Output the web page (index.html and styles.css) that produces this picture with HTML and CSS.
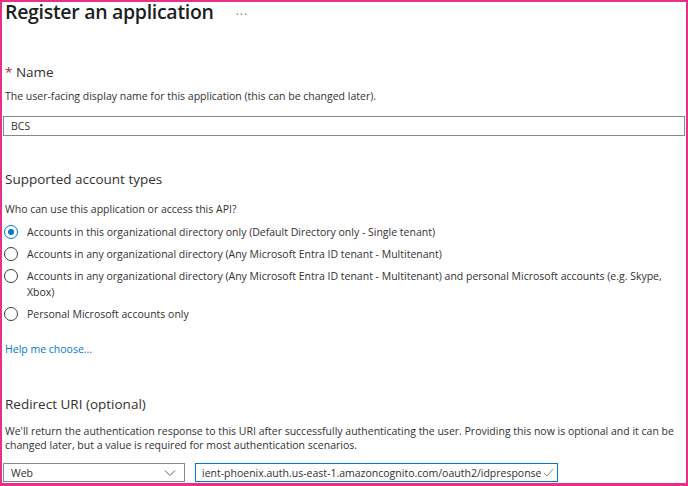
FILE: index.html
```html
<!DOCTYPE html>
<html>
<head>
<meta charset="utf-8">
<link rel="stylesheet" href="styles.css">
</head>
<body>
<div class="frame">
  <div class="title-row">
    <h1 class="title">Register an application</h1>
    <span class="more">···</span>
  </div>

  <section class="name-section">
    <div class="label"><span class="req">*</span> Name</div>
    <div class="desc">The user-facing display name for this application (this can be changed later).</div>
    <div class="textbox">BCS</div>
  </section>

  <section class="accounts">
    <div class="heading">Supported account types</div>
    <div class="desc">Who can use this application or access this API?</div>
    <ul class="radios">
      <li class="radio checked"><span class="dot"></span><span class="rtext">Accounts in this organizational directory only (Default Directory only - Single tenant)</span></li>
      <li class="radio"><span class="dot"></span><span class="rtext">Accounts in any organizational directory (Any Microsoft Entra ID tenant - Multitenant)</span></li>
      <li class="radio"><span class="dot"></span><span class="rtext">Accounts in any organizational directory (Any Microsoft Entra ID tenant - Multitenant) and personal Microsoft accounts (e.g. Skype, Xbox)</span></li>
      <li class="radio"><span class="dot"></span><span class="rtext">Personal Microsoft accounts only</span></li>
    </ul>
    <a class="help">Help me choose...</a>
  </section>

  <section class="redirect">
    <div class="heading">Redirect URI (optional)</div>
    <div class="desc wrap">We'll return the authentication response to this URI after successfully authenticating the user. Providing this now is optional and it can be changed later, but a value is required for most authentication scenarios.</div>
    <div class="uri-row">
      <div class="select"><span>Web</span>
        <svg class="chev" width="12" height="8" viewBox="0 0 12 8"><path d="M1 1.5 L6 6.5 L11 1.5" fill="none" stroke="#605e5c" stroke-width="1"/></svg>
      </div>
      <div class="uri"><span class="uri-text">ient-phoenix.auth.us-east-1.amazoncognito.com/oauth2/idpresponse</span>
        <svg class="check" width="11" height="9" viewBox="0 0 11 9"><path d="M1 5 L4 8 L10 1" fill="none" stroke="#8a9a5b" stroke-width="1"/></svg>
      </div>
    </div>
  </section>
</div>
</body>
</html>
```
FILE: styles.css
```css
html, body {
  margin: 0;
  padding: 0;
  background: #fff;
}
body {
  font-family: "Open Sans", "Noto Sans", sans-serif;
  color: #323130;
}
.frame {
  width: 688px;
  height: 486px;
  box-sizing: border-box;
  border: 2px solid #e8308a;
  border-bottom-width: 3px;
  overflow: hidden;
  padding: 0 1px 0 1px;
}
.title-row {
  display: flex;
  align-items: baseline;
  height: 32px;
}
.title {
  margin: 0 0 0 2px;
  font-size: 19.5px;
  font-weight: 600;
  color: #201f1e;
  letter-spacing: -0.3px;
  line-height: 20px;
}
.more {
  margin-left: 22px;
  font-size: 12px;
  color: #8a8886;
  letter-spacing: 1px;
}
.label, .heading {
  font-size: 13.5px;
  line-height: 20px;
  padding-left: 2px;
  color: #323130;
}
.name-section .label {
  margin-top: 28px;
}
.req {
  color: #a4262c;
}
.desc {
  font-size: 10.5px;
  line-height: 14px;
  padding-left: 2px;
  color: #323130;
  white-space: nowrap;
}
.desc.wrap {
  white-space: normal;
  padding-right: 10px;
}
.name-section .desc {
  margin-top: 7px;
}
.textbox {
  margin-top: 13px;
  height: 20px;
  box-sizing: border-box;
  border: 1px solid #8a8886;
  font-size: 10.5px;
  line-height: 18px;
  padding-left: 7px;
  color: #323130;
}
.accounts .heading {
  margin-top: 33px;
}
.accounts .desc {
  margin-top: 13px;
}
.radios {
  list-style: none;
  margin: 5px 0 0 0;
  padding: 0;
}
.radio {
  display: flex;
  align-items: flex-start;
  padding: 3px 0 3px 1px;
  font-size: 10.5px;
  line-height: 16px;
}
.dot {
  flex: none;
  width: 14px;
  height: 14px;
  border: 1px solid #3b3a39;
  border-radius: 50%;
  margin-top: 1px;
  margin-right: 9px;
  box-sizing: border-box;
  position: relative;
}
.radio.checked .dot {
  border-color: #0078d4;
}
.radio.checked .dot::after {
  content: "";
  position: absolute;
  left: 3px;
  top: 3px;
  width: 6px;
  height: 6px;
  border-radius: 50%;
  background: #0078d4;
}
.rtext {
  padding-right: 10px;
}
.help {
  display: block;
  margin-top: 17px;
  padding-left: 2px;
  font-size: 10.5px;
  line-height: 14px;
  color: #0078d4;
}
.redirect .heading {
  margin-top: 38px;
}
.redirect .desc {
  margin-top: 10px;
}
.uri-row {
  display: flex;
  gap: 10px;
  margin-top: 11px;
}
.select {
  width: 182px;
  height: 19px;
  box-sizing: border-box;
  border: 1px solid #8a8886;
  display: flex;
  align-items: center;
  justify-content: space-between;
  padding: 0 8px 0 7px;
  font-size: 10.5px;
}
.uri {
  width: 363px;
  height: 19px;
  box-sizing: border-box;
  border: 1px solid #0078d4;
  display: flex;
  align-items: center;
  padding: 0 0 0 6px;
  font-size: 10.5px;
  overflow: hidden;
}
.uri-text {
  white-space: nowrap;
}
.check {
  flex: none;
  margin-left: 1px;
}
```
